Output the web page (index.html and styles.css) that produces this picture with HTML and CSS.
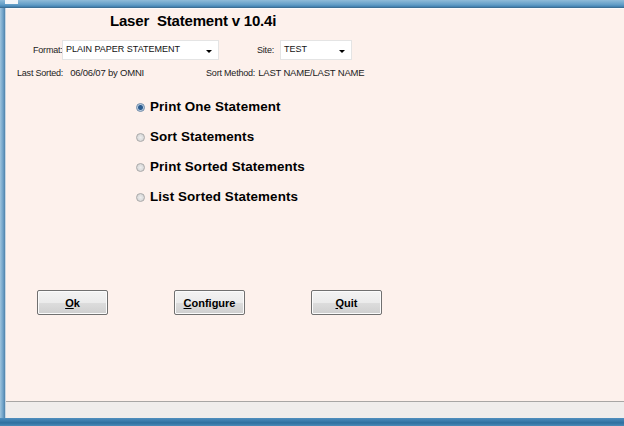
FILE: index.html
```html
<!DOCTYPE html>
<html lang="en">
<head>
    <meta charset="UTF-8">
    <title>Laser Statement v 10.4i</title>
    <link rel="stylesheet" href="styles.css">
</head>
<body>
    <div class="window">
        <div class="titlebar"><span class="app-icon"></span></div>
        <div class="frame-row">
            <div class="left-edge"></div>
            <div class="client">
                <main class="form">
                    <h1>Laser&nbsp; Statement v 10.4i</h1>

                    <div class="fields">
                        <label class="field-label format-label">Format:</label>
                        <div class="combo combo-format">
                            <span>PLAIN PAPER STATEMENT</span>
                            <i class="arrow"></i>
                        </div>
                        <label class="field-label site-label">Site:</label>
                        <div class="combo combo-site">
                            <span>TEST</span>
                            <i class="arrow"></i>
                        </div>
                    </div>

                    <div class="info">
                        <span class="info-label">Last Sorted:</span>
                        <span class="info-value sorted-value">06/06/07 by OMNI</span>
                        <span class="info-label method-label">Sort Method:</span>
                        <span class="info-value">LAST NAME/LAST NAME</span>
                    </div>

                    <div class="options">
                        <div class="option"><span class="radio checked"></span>Print One Statement</div>
                        <div class="option"><span class="radio"></span>Sort Statements</div>
                        <div class="option"><span class="radio"></span>Print Sorted Statements</div>
                        <div class="option"><span class="radio"></span>List Sorted Statements</div>
                    </div>

                    <div class="buttons">
                        <button><u>O</u>k</button>
                        <button><u>C</u>onfigure</button>
                        <button><u>Q</u>uit</button>
                    </div>
                </main>
                <div class="statusbar"></div>
            </div>
        </div>
        <div class="bottom-edge"></div>
    </div>
</body>
</html>
```

FILE: styles.css
```css
* {
    margin: 0;
    padding: 0;
    box-sizing: border-box;
}

body {
    width: 624px;
    height: 426px;
    overflow: hidden;
    font-family: "Liberation Sans", Arial, sans-serif;
    color: #000;
}

.window {
    display: flex;
    flex-direction: column;
    height: 426px;
}

.titlebar {
    height: 8px;
    background: linear-gradient(180deg, #8fbcd9, #5f9cc6 70%, #3f7ead);
    border-bottom: 1px solid #3d6f95;
    padding-left: 5px;
}

.app-icon {
    display: block;
    width: 13px;
    height: 4px;
    background: #f4f7fa;
}

.frame-row {
    flex: 1;
    display: flex;
}

.left-edge {
    width: 6px;
    background: linear-gradient(90deg, #9ec3dd, #6fa2c8 60%, #4f82aa);
    border-right: 1px solid #c8d6e2;
}

.client {
    flex: 1;
    display: flex;
    flex-direction: column;
    background: #fdf1ec;
    border-top: 1px solid #fbfbfb;
}

.form {
    flex: 1;
    display: flex;
    flex-direction: column;
}

h1 {
    font-size: 15px;
    line-height: 20px;
    font-weight: bold;
    letter-spacing: -0.2px;
    margin: 2px 0 0 104px;
    height: 20px;
}

/* Format / Site row */
.fields {
    display: flex;
    align-items: center;
    margin-top: 9px;
    height: 20px;
}

.field-label {
    font-size: 9px;
    color: #222;
    letter-spacing: -0.2px;
}

.format-label {
    margin-left: 27px;
    width: 29px;
}

.site-label {
    margin-left: 38px;
    width: 23px;
}

.combo {
    height: 20px;
    background: #fff;
    border: 1px solid #e4e4e4;
    display: flex;
    align-items: center;
    justify-content: space-between;
    padding: 0 6px 0 3px;
    font-size: 9px;
    color: #111;
}

.combo span {
    margin-top: -3px;
}

.combo-format {
    width: 157px;
}

.combo-site {
    width: 72px;
}

.arrow {
    width: 0;
    height: 0;
    border-left: 3px solid transparent;
    border-right: 3px solid transparent;
    border-top: 3px solid #000;
    margin-top: 3px;
}

/* Last sorted row */
.info {
    display: flex;
    margin-top: 7px;
    font-size: 9px;
    line-height: 12px;
    color: #222;
    letter-spacing: -0.2px;
}

.info-label {
    margin-left: 11px;
}

.method-label {
    margin-left: 62px;
}

.info-value {
    margin-left: 3px;
    font-size: 9.5px;
}

.info .sorted-value {
    margin-left: 7px;
}

/* Menu options */
.options {
    display: flex;
    flex-direction: column;
    gap: 14px;
    margin: 20px 0 0 130px;
}

.option {
    display: flex;
    align-items: center;
    font-size: 13.4px;
    line-height: 16px;
    font-weight: bold;
    letter-spacing: 0.1px;
}

.radio {
    width: 9px;
    height: 9px;
    border-radius: 50%;
    border: 1px solid #a9a9a9;
    background: radial-gradient(circle, #eeeeee, #cfcfcf);
    margin-right: 5px;
}

.radio.checked {
    border-color: #6d8aa8;
    background: radial-gradient(circle, #2a5b8f 0 2px, #b8cbe0 3px, #e8eef5);
}

/* Buttons */
.buttons {
    display: flex;
    gap: 66px;
    margin: 85px 0 0 31px;
}

button {
    width: 71px;
    height: 25px;
    font-family: "Liberation Sans", Arial, sans-serif;
    font-size: 11px;
    font-weight: bold;
    color: #000;
    background: linear-gradient(180deg, #f3f3f3, #ebebeb 50%, #dddddd 51%, #cfcfcf);
    border: 1px solid #707070;
    border-radius: 2px;
    box-shadow: inset 0 0 0 1px #fbfbfb;
}

.statusbar {
    height: 17px;
    background: #f0edec;
    border-top: 1px solid #a8a6a5;
}

.bottom-edge {
    height: 8px;
    background: linear-gradient(180deg, #4f8fbf, #2f6f9f 60%, #4a8ab8);
}
```
